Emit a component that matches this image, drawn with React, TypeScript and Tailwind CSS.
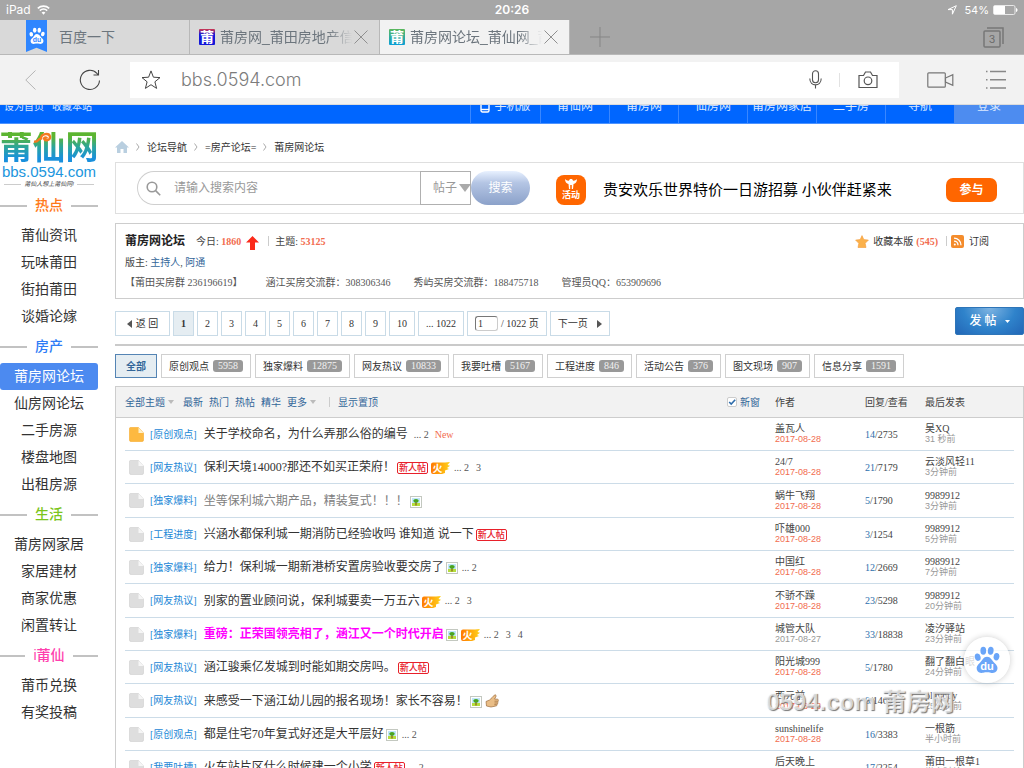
import type { ReactNode } from "react";

type Badge = "new" | "fire" | "pic" | "thumb";

interface Thread {
  cat: string;
  title: string;
  tone?: "muted" | "hot";
  badges?: Badge[];
  pages?: string[];
  fresh?: boolean;
  author: string;
  date: string;
  replies: string;
  views: string;
  last: string;
  ago: string;
}

const threads: Thread[] = [
  { cat: "原创观点", title: "关于学校命名，为什么弄那么俗的编号", pages: ["2"], fresh: true, author: "盖瓦人", date: "2017-08-28", replies: "14", views: "2735", last: "吴XQ", ago: "31 秒前" },
  { cat: "网友热议", title: "保利天境14000?那还不如买正荣府！", badges: ["new", "fire"], pages: ["2", "3"], author: "24/7", date: "2017-08-28", replies: "21", views: "7179", last: "云淡风轻11", ago: "3分钟前" },
  { cat: "独家爆料", title: "坐等保利城六期产品，精装复式！！！", tone: "muted", badges: ["pic"], author: "蜗牛飞翔", date: "2017-08-28", replies: "5", views: "1790", last: "9989912", ago: "3分钟前" },
  { cat: "工程进度", title: "兴涵水都保利城一期消防已经验收吗 谁知道 说一下", badges: ["new"], author: "吓雄000", date: "2017-08-28", replies: "3", views: "1254", last: "9989912", ago: "5分钟前" },
  { cat: "独家爆料", title: "给力！保利城一期新港桥安置房验收要交房了", badges: ["pic"], pages: ["2"], author: "中国红", date: "2017-08-28", replies: "12", views: "2669", last: "9989912", ago: "7分钟前" },
  { cat: "网友热议", title: "别家的置业顾问说，保利城要卖一万五六", badges: ["fire"], pages: ["2", "3"], author: "不骄不躁", date: "2017-08-28", replies: "23", views: "5298", last: "9989912", ago: "20分钟前" },
  { cat: "独家爆料", title: "重磅：正荣国领亮相了，涵江又一个时代开启", tone: "hot", badges: ["pic", "fire"], pages: ["2", "3", "4"], author: "城管大队", date: "2017-08-27", replies: "33", views: "18838", last: "凌汐驿站", ago: "23分钟前" },
  { cat: "网友热议", title: "涵江骏乘亿发城到时能如期交房吗。", badges: ["new"], author: "阳光城999", date: "2017-08-28", replies: "5", views: "1780", last: "翻了翻白眼", ago: "24分钟前" },
  { cat: "网友热议", title: "来感受一下涵江幼儿园的报名现场！家长不容易！", badges: ["pic", "thumb"], author: "西元前", date: "2017-08-28", replies: "8", views: "1469", last: "playboy", ago: "25分钟前" },
  { cat: "原创观点", title: "都是住宅70年复式好还是大平层好", badges: ["pic"], pages: ["2"], author: "sunshinelife", date: "2017-08-28", replies: "16", views: "3383", last: "一根筋", ago: "半小时前" },
  { cat: "我要吐槽", title: "火车站片区什么时候建一个小学", badges: ["new"], pages: ["2"], author: "后天晚上", date: "2017-08-28", replies: "17", views: "2254", last: "莆田一根草1", ago: "半小时前" },
];

const sideGroups = [
  { name: "热点", color: "text-[#ff7a1a]", items: ["莆仙资讯", "玩味莆田", "街拍莆田", "谈婚论嫁"] },
  { name: "房产", color: "text-[#2f7df6]", items: ["莆房网论坛", "仙房网论坛", "二手房源", "楼盘地图", "出租房源"] },
  { name: "生活", color: "text-[#7cc51c]", items: ["莆房网家居", "家居建材", "商家优惠", "闲置转让"] },
  { name: "i莆仙", color: "text-[#ff3fae]", items: ["莆币兑换", "有奖投稿"] },
];

const navItems = ["莆仙网", "莆房网", "仙房网", "莆房网家居", "二手房", "导航"];

const filters: [string, string][] = [
  ["原创观点", "5958"],
  ["独家爆料", "12875"],
  ["网友热议", "10833"],
  ["我要吐槽", "5167"],
  ["工程进度", "846"],
  ["活动公告", "376"],
  ["图文现场", "907"],
  ["信息分享", "1591"],
];

function Paw({ className, body, text }: { className: string; body: string; text: string }) {
  return (
    <svg viewBox="0 0 28 30" className={className} aria-hidden="true">
      <g fill={body}>
        <ellipse cx="4" cy="12" rx="3.1" ry="4" transform="rotate(-14 4 12)" />
        <ellipse cx="10" cy="5" rx="3.1" ry="4.3" />
        <ellipse cx="18" cy="5" rx="3.1" ry="4.3" transform="rotate(6 18 5)" />
        <ellipse cx="24.2" cy="11.5" rx="3.1" ry="4" transform="rotate(12 24.2 11.5)" />
        <path d="M14 11.500c4 0 5.200 4 7.800 6.400 3 2.700 4.200 4.600 3.200 7.600-1.200 3.400-4.600 3.700-7 3.200-2.600-.5-5.400-.5-8 0-2.700.5-5.800.1-6.900-3.200-.9-3 .4-5 3.300-7.600C9.200 15.300 10.100 11.500 14 11.500z" />
      </g>
      <text x="14" y="26" textAnchor="middle" fontSize="12" fontWeight="700" fill={text} fontFamily="Liberation Sans, sans-serif">
        du
      </text>
    </svg>
  );
}

function CloseX() {
  return (
    <svg viewBox="0 0 14 14" className="size-[14px] shrink-0" fill="none" stroke="#8f8f8f" strokeWidth="1" aria-hidden="true">
      <path d="M0.500 0.500 13.500 13.500M13.500 0.500 0.500 13.500" />
    </svg>
  );
}

function BrowserTab({ icon, label, active }: { icon: string; label: string; active?: boolean }) {
  return (
    <div className={`flex w-[190px] items-center border-r border-[#b8b8b8] pr-[11px] pl-[9px] ${active ? "bg-[#f2f2f2]" : "bg-[#d9d9d9]"}`}>
      <span className={`flex size-4 shrink-0 items-center justify-center rounded-[1px] text-[14px] leading-4 font-bold text-white ${icon}`}>莆</span>
      <a href="#tab" className="ml-[5px] flex-1 overflow-hidden text-[14px] whitespace-nowrap text-[#6c757d] [mask-image:linear-gradient(to_right,black_82%,transparent)]">
        {label}
      </a>
      <button type="button" aria-label="关闭标签页" className="ml-[2px]">
        <CloseX />
      </button>
    </div>
  );
}

function StatusBar() {
  return (
    <div className="grid h-5 shrink-0 grid-cols-3 items-center bg-[#a6a6a6] px-[6px] font-[Inter,'Noto_Sans_CJK_SC',sans-serif] text-[12px] text-white">
      <div className="flex items-center gap-[6px]">
        <span>iPad</span>
        <svg viewBox="0 0 13 10" className="h-[10px] w-[13px]" fill="none" stroke="#fff" strokeWidth="1.600" aria-hidden="true">
          <path d="M0.800 3.400C4 .4 9 .4 12.200 3.400M2.800 5.700c2.200-2 5.200-2 7.400 0" />
          <path d="M4.600 7.600c1.200-1.100 2.600-1.100 3.800 0L6.500 9.700z" fill="#fff" stroke="none" />
        </svg>
      </div>
      <div className="text-center text-[12px] font-semibold">20:26</div>
      <div className="flex items-center justify-end gap-1">
        <svg viewBox="0 0 10 10" className="mr-[3px] size-[10px]" fill="none" stroke="#fff" strokeWidth="1" aria-hidden="true">
          <path d="M9.300.7 1 4.600h4.400v4.600z" />
        </svg>
        <span className="text-[11px]">54%</span>
        <svg viewBox="0 0 25 10" className="h-[10px] w-[25px]" aria-hidden="true">
          <rect x=".5" y=".5" width="21.500" height="9" rx="1.500" fill="none" stroke="#e8e8e8" />
          <rect x="1" y="1" width="11" height="8" fill="#fff" />
          <path d="M23 3c2 .5 2 3.500 0 4z" fill="#fff" />
        </svg>
      </div>
    </div>
  );
}

function Tabs() {
  return (
    <div className="flex h-[35px] shrink-0 border-b border-[#b8b8b8] bg-[#a6a6a6]">
      <div className="flex w-[190px] border-r border-[#b8b8b8] bg-[#d9d9d9] pl-[26px]">
        <div className="flex h-8 w-[21px] items-center justify-center bg-[#2f86ff] [clip-path:polygon(0_0,100%_0,100%_100%,50%_87%,0_100%)]">
          <Paw className="h-[18px] w-4" body="#fff" text="#2f86ff" />
        </div>
        <a href="#baidu" className="ml-3 flex items-center text-[14px] text-[#6c757d]">百度一下</a>
      </div>
      <BrowserTab icon="bg-[linear-gradient(#d2384e_0%,#1418d8_35%)]" label="莆房网_莆田房地产信息网" />
      <BrowserTab active icon="bg-[linear-gradient(#5cb85c,#0a9fd8)]" label="莆房网论坛_莆仙网_莆田" />
      <button type="button" aria-label="新建标签页" className="ml-5">
        <svg viewBox="0 0 20 20" className="size-5" stroke="#858585" strokeWidth="1" aria-hidden="true">
          <path d="M10 0v20M0 10h20" />
        </svg>
      </button>
      <button type="button" aria-label="标签页" className="mr-5 ml-auto">
        <svg viewBox="0 0 21 21" className="size-[21px]" fill="none" stroke="#777" strokeWidth="1.500" aria-hidden="true">
          <rect x="1" y="4" width="16" height="16" rx="1" />
          <path d="M4 1h16v16" />
          <text x="9" y="16" textAnchor="middle" fontSize="10.500" fill="#6a6a6a" stroke="none" fontFamily="Inter, sans-serif">3</text>
        </svg>
      </button>
    </div>
  );
}

function Toolbar() {
  return (
    <div className="flex h-[50px] shrink-0 items-center border-b border-[#dcdcdc] bg-[#f2f2f2]">
      <button type="button" aria-label="后退" className="flex w-[60px] justify-center">
        <svg viewBox="0 0 11 20" className="h-5 w-[11px]" fill="none" stroke="#b5b5b5" strokeWidth="1" aria-hidden="true">
          <path d="M10.500.5.8 10l9.700 9.500" />
        </svg>
      </button>
      <button type="button" aria-label="刷新" className="flex w-[60px] justify-center">
        <svg viewBox="0 0 22 22" className="size-[22px]" fill="none" stroke="#444" strokeWidth="1.100" aria-hidden="true">
          <path d="M20.500 11.500a9.600 9.600 0 1 1-2.600-7.200l1.500 1.500M19.500 1v5h-5" />
        </svg>
      </button>
      <form className="mr-[13px] ml-[10px] flex h-9 min-w-0 flex-1 items-center bg-white pr-[21px] pl-[11px]" onSubmit={(e) => e.preventDefault()}>
        <svg viewBox="0 0 20 20" className="size-5 shrink-0" fill="none" stroke="#444" strokeWidth="1" aria-hidden="true">
          <path d="M10 .9 12.400 7.200l6.600.4-5.100 4.200 1.700 6.600L10 14.700l-5.600 3.700 1.700-6.600L1 7.600l6.600-.4z" />
        </svg>
        <input aria-label="网址" defaultValue="bbs.0594.com" className="ml-5 min-w-0 flex-1 bg-transparent font-[Inter,sans-serif] text-[18px] font-light text-[#7c7c7c] outline-none" />
        <button type="button" aria-label="语音" className="mr-[17px]">
          <svg viewBox="0 0 13 19" className="h-[19px] w-[13px]" fill="none" stroke="#555" strokeWidth="1.100" aria-hidden="true">
            <rect x="3.500" y=".8" width="6" height="12" rx="3" />
            <path d="M.8 8.500c0 8.500 11.400 8.500 11.400 0M6.500 15v3.500" />
          </svg>
        </button>
        <span className="h-[14px] w-px bg-[#e2e2e2]" />
        <button type="button" aria-label="拍照" className="ml-[18px]">
          <svg viewBox="0 0 20 18" className="h-[18px] w-5" fill="none" stroke="#555" strokeWidth="1.200" aria-hidden="true">
            <path d="M1 4.500h4.500L7.500 1h5l2 3.500H19v12H1z" />
            <circle cx="10" cy="9.800" r="3.800" />
          </svg>
        </button>
      </form>
      <button type="button" aria-label="视频" className="flex w-14 justify-center">
        <svg viewBox="0 0 27 16" className="h-4 w-[27px]" fill="none" stroke="#777" strokeWidth="1.200" aria-hidden="true">
          <rect x=".8" y=".8" width="17.500" height="14.400" rx="1" />
          <path d="M18.500 6 25.800 2.700v10.600L18.500 10z" />
        </svg>
      </button>
      <button type="button" aria-label="菜单" className="flex w-14 justify-center">
        <svg viewBox="0 0 20 20" className="size-5" stroke="#888" strokeWidth="1.400" aria-hidden="true">
          <path d="M0 1.500h1.500M4 1.500h16M0 9.800h1.500M4 9.800h16M0 18h1.500M4 18h16" />
        </svg>
      </button>
    </div>
  );
}

function SiteNav() {
  return (
    <nav className="-mt-[17px] flex h-9 items-stretch border-b border-[#4d93ff] bg-[#0066ff] text-[12px] text-[#dbe9ff]">
      <div className="flex flex-1 items-center gap-2 pt-px pl-1 text-[10px]">
        <a href="#home">设为首页</a>
        <a href="#fav">收藏本站</a>
      </div>
      <a href="#mobile" className="flex w-[70px] items-center justify-center gap-1 border-l border-[#3a87ff]">
        <svg viewBox="0 0 10 15" className="h-[15px] w-[10px]" fill="none" stroke="#fff" strokeWidth="1.400" aria-hidden="true">
          <rect x="1" y="1" width="8" height="13" rx="1.500" />
          <path d="M1 11.500h8" />
        </svg>
        手机版
      </a>
      {navItems.map((n) => (
        <a key={n} href="#nav" className="flex w-[69px] items-center justify-center border-l border-[#3a87ff]">{n}</a>
      ))}
      <a href="#login" className="flex w-[70px] items-center justify-center bg-[#4d8cf0]">登录</a>
    </nav>
  );
}

function Logo() {
  return (
    <a href="#logo" className="relative flex h-[65px] flex-col items-center pt-2 whitespace-nowrap">
      <span className="bg-[linear-gradient(#5cb531_15%,#2aa4a0_50%,#1990dc_85%)] bg-clip-text text-[33px] leading-[31px] font-bold text-transparent">莆仙网</span>
      <svg viewBox="0 0 20 12" className="absolute top-[8px] left-[33px] h-3 w-5" fill="none" aria-hidden="true">
        <path d="M1 9.500c4 1 4-3 7-3 0-5 8-6 9-2 .5 4-5 5-6 2 .5-1.500 2.500-1.500 3 0" stroke="#f47a20" strokeWidth="2.400" />
      </svg>
      <span className="font-['Liberation_Sans',sans-serif] text-[15px] leading-[17px] text-[#2196dd]">bbs.0594.com</span>
      <span className="flex w-full items-center gap-[3px] px-1 text-[6px] leading-[9px] text-[#444] italic">
        <i className="h-px flex-1 bg-[#ccc]" />
        莆仙人想上莆仙网!
        <i className="h-px flex-1 bg-[#ccc]" />
      </span>
    </a>
  );
}

function Sidebar() {
  return (
    <aside className="w-[98px] shrink-0">
      <Logo />
      {sideGroups.map((g) => (
        <section key={g.name}>
          <h2 className={`flex h-[33px] items-center gap-2 text-[14px] font-medium ${g.color}`}>
            <i className="h-[2px] flex-1 bg-[#c2c2c2]" />
            {g.name}
            <i className="h-[2px] flex-1 bg-[#c2c2c2]" />
          </h2>
          <ul>
            {g.items.map((it) => (
              <li key={it}>
                <a href="#side" className={`flex h-[27px] items-center justify-center rounded-[3px] text-[14px] ${it === "莆房网论坛" ? "bg-[#4c8af0] text-white" : "text-[#333]"}`}>
                  {it}
                </a>
              </li>
            ))}
          </ul>
        </section>
      ))}
    </aside>
  );
}

function Breadcrumb() {
  const sep = (
    <svg viewBox="0 0 4 8" className="mx-px h-2 w-1" fill="none" stroke="#aaa" aria-hidden="true">
      <path d="M.5.5 3 4 .5 7.500" />
    </svg>
  );
  return (
    <div className="flex h-[38px] items-center gap-[6px] pt-2 text-[10px] text-[#333]">
      <svg viewBox="0 0 14 12" className="h-3 w-[14px]" fill="#b9cfe0" aria-hidden="true">
        <path d="M7 0 14 6.500h-2V12H8.500V8h-3v4H2V6.500H0z" />
      </svg>
      {sep}
      <a href="#1">论坛导航</a>
      {sep}
      <a href="#2">=房产论坛=</a>
      {sep}
      <a href="#3">莆房网论坛</a>
    </div>
  );
}

function SearchPanel() {
  return (
    <div className="flex h-[52px] items-center border border-[#dfdfdf] pr-[26px] pl-[21px]">
      <form className="flex h-[34px] text-[12px] text-[#999]" onSubmit={(e) => e.preventDefault()}>
        <label className="flex w-[283px] items-center rounded-l-full border border-r-0 border-[#cfcfcf] pl-2">
          <svg viewBox="0 0 15 15" className="size-[15px]" fill="none" stroke="#999" strokeWidth="1.600" aria-hidden="true">
            <circle cx="6" cy="6" r="4.800" />
            <path d="m9.600 9.600 4.600 4.600" />
          </svg>
          <input aria-label="搜索内容" placeholder="请输入搜索内容" className="ml-[13px] min-w-0 flex-1 outline-none placeholder:text-[#999]" />
        </label>
        <div className="relative flex">
          <select aria-label="搜索类型" className="w-[51px] appearance-none border border-[#b0b0b0] bg-transparent pl-3 outline-none">
            <option>帖子</option>
          </select>
          <svg viewBox="0 0 12 8" className="pointer-events-none absolute top-[13px] right-0 h-2 w-3" fill="#aaa" aria-hidden="true">
            <path d="M0 0h12L6 8z" />
          </svg>
        </div>
        <button type="submit" className="w-[59px] rounded-full bg-[linear-gradient(#e8f1ff,#b4c5e4_35%,#8ba1c9)] text-[12px] text-white">搜索</button>
      </form>
      <span className="mt-[3px] ml-[26px] flex size-[30px] flex-col items-center justify-center rounded-[8px] bg-[#ff6600] text-[9px] leading-[11px] font-bold text-white">
        <svg viewBox="0 0 12 11" className="h-[11px] w-3" fill="#fff" aria-hidden="true">
          <path d="M0 0c1.500 1.500 3 2 4 1.500L5 0h2l1 1.500C9 2 10.500 1.500 12 0c0 3-1.500 4.500-3.500 5L8 10H6.800V6H5.200v4H4L3.500 5C1.500 4.500 0 3 0 0z" />
        </svg>
        活动
      </span>
      <a href="#promo" className="ml-[17px] pt-[5px] text-[15px] text-black">贵安欢乐世界特价一日游招募 小伙伴赶紧来</a>
      <button type="button" className="mt-[3px] ml-auto h-6 w-[51px] rounded-[7px] bg-[#ff6600] text-[12px] font-bold text-white">参与</button>
    </div>
  );
}

function Divider() {
  return <i className="h-[10px] w-px bg-[#ccc]" />;
}

function ForumInfo() {
  return (
    <div className="mt-[9px] flex h-[76px] justify-between border border-[#cdcdcd] pr-[34px] pl-[9px] text-[10px] text-[#444]">
      <div className="flex flex-col pt-[7px]">
        <div className="flex h-5 items-center">
          <h1 className="text-[12px] font-bold text-[#222]">莆房网论坛</h1>
          <span className="ml-[11px]">今日: <b className="text-[#f26c4f]">1860</b></span>
          <svg viewBox="0 0 13 14" className="mt-[3px] ml-[5px] h-[14px] w-[13px]" aria-hidden="true">
            <path d="M6.500 0 13 6.500H9V14H4V6.500H0z" fill="#fb2a1a" />
          </svg>
          <span className="mr-[6px] ml-[9px] flex"><Divider /></span>
          <span>主题: <b className="text-[#f26c4f]">53125</b></span>
        </div>
        <div className="flex h-[22px] items-center">
          版主:&nbsp;<a href="#host" className="text-[#336699]">主持人</a>,&nbsp;<a href="#at" className="text-[#336699]">阿通</a>
        </div>
        <div className="flex h-[18px] items-center gap-[23px] text-[#555]">
          <span>【莆田买房群 236196619】</span>
          <span>涵江买房交流群：308306346</span>
          <span>秀屿买房交流群：188475718</span>
          <span>管理员QQ：653909696</span>
        </div>
      </div>
      <div className="flex h-[34px] items-center text-[#333]">
        <svg viewBox="0 0 14 13" className="mr-1 h-[13px] w-[14px]" fill="#fbb14b" stroke="#f39a3a" strokeWidth=".6" aria-hidden="true">
          <path d="m7 .6 1.800 4 4.600.5-3.200 3.200.8 4.200H3l.8-4.200L.6 5.100l4.600-.5z" />
        </svg>
        <a href="#collect">收藏本版</a>
        <b className="mr-2 ml-[3px] text-[#f26c4f]">(545)</b>
        <Divider />
        <svg viewBox="0 0 13 13" className="mr-[5px] ml-1 size-[13px]" aria-hidden="true">
          <rect width="13" height="13" rx="2" fill="#f48c2c" />
          <g fill="none" stroke="#fff" strokeWidth="1.300">
            <path d="M3 3.200c4 0 7 3 7 7M3 6.200c2.500 0 4 1.500 4 4" />
          </g>
          <circle cx="3.800" cy="9.400" r="1" fill="#fff" />
        </svg>
        <a href="#rss">订阅</a>
      </div>
    </div>
  );
}

const pageBox = "flex items-center border border-[#c9dbe7] px-[7px]";

function Pagination() {
  return (
    <div className="mt-2 flex h-[39px] items-start justify-between border-b-2 border-[#cacaca]">
      <div className="mt-1 flex h-[25px] gap-[3px] text-[10px] text-[#333]">
        <a href="#back" className={`${pageBox} w-[55px] justify-center gap-1`}>
          <svg viewBox="0 0 5 8" className="h-2 w-[5px]" fill="#555" aria-hidden="true"><path d="M5 0v8L0 4z" /></svg>
          返 回
        </a>
        <strong className={`${pageBox} bg-[#e5edf2]`}>1</strong>
        {["2", "3", "4", "5", "6", "7", "8", "9", "10", "... 1022"].map((p) => (
          <a key={p} href="#page" className={pageBox}>{p}</a>
        ))}
        <label className={`${pageBox} gap-[3px]`}>
          <input aria-label="页码" defaultValue="1" className="h-[15px] w-[23px] rounded-[3px] border border-[#ccc] border-t-[#777] border-l-[#777] px-[2px] outline-none" />
          / 1022 页
        </label>
        <a href="#next" className={`${pageBox} gap-[9px] px-2`}>
          下一页
          <svg viewBox="0 0 5 8" className="h-2 w-[5px]" fill="#555" aria-hidden="true"><path d="M0 0v8l5-4z" /></svg>
        </a>
      </div>
      <button type="button" className="flex h-7 w-[69px] items-center justify-center gap-2 rounded-[2px] border border-[#2e75b8] bg-[radial-gradient(ellipse_at_top,#7fb4e2,#2f83cb_55%,#2266b6)] text-[12px] font-medium text-white">
        发 帖
        <svg viewBox="0 0 5 3" className="h-[3px] w-[5px]" fill="#fff" aria-hidden="true"><path d="M0 0h5L2.500 3z" /></svg>
      </button>
    </div>
  );
}

function Filters() {
  return (
    <div className="mt-2 flex h-6 gap-1 text-[10px] text-[#333]">
      <a href="#all" className="flex items-center border border-[#5484b4] bg-[#e5edf2] px-[10px] font-bold text-[#336699]">全部</a>
      {filters.map(([name, count]) => (
        <a key={name} href="#filter" className="flex items-center gap-1 border border-[#d0d0d0] px-[7px]">
          {name}
          <span className="rounded-[3px] bg-[#999] px-[5px] leading-3 text-[#f2f2f2]">{count}</span>
        </a>
      ))}
    </div>
  );
}

function Caret() {
  return (
    <svg viewBox="0 0 6 4" className="h-1 w-[6px]" fill="#bbb" aria-hidden="true"><path d="M0 0h6L3 4z" /></svg>
  );
}

function BadgeIcon({ kind }: { kind: Badge }) {
  if (kind === "new") {
    return <span className="mt-[2px] rounded-[2px] border border-[#e8202a] px-px text-[9px] leading-[10px] font-medium text-[#e8202a]">新人帖</span>;
  }
  if (kind === "fire") {
    return (
      <svg viewBox="0 0 19 12" className="mt-[2px] h-3 w-[19px]" role="img" aria-label="火">
        <defs>
          <linearGradient id="fireFill" x1="0" x2="1">
            <stop offset="0" stopColor="#ff7a00" />
            <stop offset="1" stopColor="#ffd21a" />
          </linearGradient>
        </defs>
        <path d="M2 .5h12l5-.5-2.500 3 2.500.7-3 2.300 2 1-4 1.500V11l-3 1H2Q0 12 0 10V2.500Q0 .5 2 .5z" fill="url(#fireFill)" />
        <text x="6.500" y="9.800" textAnchor="middle" fontSize="10" fontWeight="700" fill="#fff" fontFamily="Noto Sans CJK SC, sans-serif">火</text>
      </svg>
    );
  }
  if (kind === "pic") {
    return (
      <svg viewBox="0 0 12 12" className="mt-[2px] size-3" aria-hidden="true">
        <rect x=".5" y=".5" width="11" height="11" fill="#fff" stroke="#c3c8c0" />
        <rect x="2" y="2" width="8" height="5" fill="#bfe6fb" />
        <rect x="2" y="7" width="8" height="3" fill="#b5dd3c" />
        <path d="M5.400 6h1.200v3.500H5.400z" fill="#8a5a1a" />
        <ellipse cx="6" cy="4.800" rx="2.700" ry="1.900" fill="#4aa51f" />
      </svg>
    );
  }
  return (
    <svg viewBox="0 0 14 14" className="size-[14px]" fill="#e9bd86" stroke="#9c6b3c" strokeWidth=".7" aria-hidden="true">
      <path d="M1 7.500 4.500 6C6.500 4.500 8 2.500 9.500 1c1.600-.6 2 .8 1.200 2.200L9.500 5l3 .2c1.200.2 1.200 1.600.2 1.900.8.6.5 1.600-.3 1.800.5.700.2 1.600-.6 1.700.3.900-.3 1.500-1.200 1.500L6 13l-4.500-1z" />
      <path d="M9.500 7.200h3M9.500 9h2.600M9.300 10.700h2.200" fill="none" />
    </svg>
  );
}

function Doc({ hot }: { hot: boolean }) {
  return (
    <svg viewBox="0 0 15 15" className="ml-1 size-[15px]" aria-hidden="true">
      <path d="M1.500.5h8L14.500 6v7q0 1.500-1.500 1.500H2Q.5 14.500.5 13V1.500q0-1 1-1z" fill={hot ? "#fdb940" : "#dedede"} stroke={hot ? "#f7a928" : "#cfcfcf"} strokeWidth=".6" />
      <path d="M9.500.5V6h5z" fill={hot ? "#fff0c8" : "#f6f6f6"} />
    </svg>
  );
}

function Line({ children, className = "" }: { children?: ReactNode; className?: string }) {
  return <td className={`border-b border-[#ccdce8] p-0 ${className}`}>{children}</td>;
}

const titleTone = {
  normal: "text-[#333]",
  muted: "text-[#808080]",
  hot: "font-bold text-[#ff00ff]",
};

function ThreadTable() {
  return (
    <div className="mt-2 border border-[#cdcdcd]">
      <table className="w-full table-fixed border-separate border-spacing-0 text-left text-[10px] whitespace-nowrap text-[#444]">
        <colgroup>
          <col className="w-[9px]" />
          <col className="w-[25px]" />
          <col />
          <col className="w-[90px]" />
          <col className="w-[60px]" />
          <col className="w-[89px]" />
          <col className="w-[9px]" />
        </colgroup>
        <thead>
          <tr className="h-[31px] bg-[#f2f2f2] [&>th]:border-b [&>th]:border-[#cdcdcd] [&>th]:p-0 [&>th]:font-normal">
            <th />
            <th colSpan={2}>
              <div className="flex items-center gap-[6px] text-[#336699]">
                <a href="#topics" className="mr-[3px] flex items-center gap-[3px]">全部主题 <Caret /></a>
                <a href="#o1">最新</a>
                <a href="#o2">热门</a>
                <a href="#o3">热帖</a>
                <a href="#o4">精华</a>
                <a href="#o5" className="mr-[7px] flex items-center gap-[3px]">更多 <Caret /></a>
                <Divider />
                <a href="#top" className="ml-[2px]">显示置顶</a>
                <label className="mr-[15px] ml-auto flex items-center gap-[3px]">
                  <input type="checkbox" defaultChecked className="peer sr-only" />
                  <svg viewBox="0 0 10 10" className="size-[10px] rounded-[2px] border border-[#ccc] bg-white" fill="none" stroke="#2d6cab" strokeWidth="2" aria-hidden="true">
                    <path d="m1.500 5 2.500 2.500L9 2.200" />
                  </svg>
                  新窗
                </label>
              </div>
            </th>
            <th>作者</th>
            <th>回复/查看</th>
            <th>最后发表</th>
            <th />
          </tr>
        </thead>
        <tbody>
          {threads.map((t, i) => (
            <tr key={t.title} className="h-[33px] nth-[3n]:h-[34px]">
              <td className="p-0" />
              <Line><Doc hot={i === 0} /></Line>
              <Line className="overflow-hidden">
                <div className="flex items-center">
                  <a href="#cat" className="text-[#1c87d6]">[{t.cat}]</a>
                  <a href="#thread" className={`mr-[2px] ml-[7px] text-[12px] ${titleTone[t.tone ?? "normal"]}`}>{t.title}</a>
                  <span className="flex items-center gap-[3px]">
                    {t.badges?.map((b) => <BadgeIcon key={b} kind={b} />)}
                  </span>
                  {t.pages && (
                    <span className="ml-[4px] flex gap-[7px] text-[#555]">
                      {t.pages.map((p, k) => <a key={p} href="#p">{k === 0 ? `... ${p}` : p}</a>)}
                    </span>
                  )}
                  {t.fresh && <span className="ml-[6px] text-[#f26c4f]">New</span>}
                </div>
              </Line>
              <Line className="leading-[11px]">
                <a href="#u" className="block">{t.author}</a>
                <span className={`block font-['Liberation_Sans',sans-serif] text-[9px] ${t.date.endsWith("27") ? "text-[#999]" : "text-[#f26c4f]"}`}>{t.date}</span>
              </Line>
              <Line><a href="#r" className="text-[#2d6fae]">{t.replies}</a>/{t.views}</Line>
              <Line className="leading-[11px]">
                <a href="#l" className="block">{t.last}</a>
                <span className="block font-['Liberation_Sans','Noto_Sans_CJK_SC',sans-serif] text-[9px] text-[#999]">{t.ago}</span>
              </Line>
              <td className="p-0" />
            </tr>
          ))}
        </tbody>
      </table>
    </div>
  );
}

export default function App() {
  return (
    <div className="relative flex h-screen flex-col overflow-hidden bg-white font-['Liberation_Sans','Noto_Sans_CJK_SC',sans-serif]">
      <StatusBar />
      <Tabs />
      <Toolbar />
      <div className="min-h-0 flex-1 overflow-hidden">
        <SiteNav />
        <div className="flex gap-[17px]">
          <Sidebar />
          <main className="min-w-0 flex-1 font-['Liberation_Serif','Noto_Sans_CJK_SC',serif]">
            <Breadcrumb />
            <SearchPanel />
            <ForumInfo />
            <Pagination />
            <Filters />
            <ThreadTable />
          </main>
        </div>
      </div>
      <button type="button" aria-label="百度" className="absolute right-[14px] bottom-[85px] flex size-[46px] items-center justify-center rounded-full bg-white/80 shadow-[0_0_6px_rgba(0,0,0,0.2)]">
        <Paw className="h-7 w-[26px]" body="#6aa5f8" text="#fff" />
      </button>
      <div className="pointer-events-none absolute right-[70px] bottom-[50px] text-[24px] leading-8 font-bold whitespace-nowrap text-white/70 [text-shadow:1px_1px_1px_#777]">0594.com 莆房网</div>
    </div>
  );
}
